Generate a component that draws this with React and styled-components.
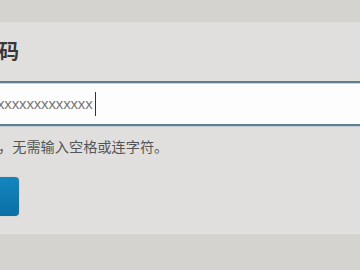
import styled, { createGlobalStyle } from 'styled-components';

const GlobalStyle = createGlobalStyle`
  html, body {
    margin: 0;
    padding: 0;
    background: #d4d3d0;
    overflow: hidden;
  }
  body {
    font-family: "Noto Sans CJK SC", "Liberation Sans", sans-serif;
  }
`;

const Page = styled.div`
  width: 360px;
  height: 270px;
  padding-top: 22px;
  box-sizing: border-box;
  overflow: hidden;
`;

const Panel = styled.section`
  height: 212px;
  background: #e0dfdd;
  padding-top: 16px;
  box-sizing: border-box;
  border-bottom: 1px solid #e4e3e1;
`;

const Heading = styled.h2`
  margin: 0;
  font-size: 20px;
  line-height: 26px;
  font-weight: 700;
  color: #383838;
  margin-left: -1px;
`;

const Field = styled.div`
  margin: 17px -4px 0 -4px;
  height: 45px;
  box-sizing: border-box;
  background: #fdfdfd;
  border-top: 2px solid #5f7f90;
  border-bottom: 2px solid #5f7f90;
  box-shadow: inset 0 1px 0 #c9d6dd, 0 1px 0 #c2ccd2;
  display: flex;
  align-items: center;
  padding-left: 2px;
`;

const Value = styled.span`
  font-family: "Liberation Sans", "DejaVu Sans", sans-serif;
  font-size: 15px;
  letter-spacing: -0.15px;
  color: #777;
  margin-left: -1px;
`;

const Caret = styled.span`
  display: inline-block;
  width: 1px;
  height: 24px;
  background: #333;
  margin-left: 2px;
`;

const Hint = styled.p`
  margin: 10px 0 0 -2px;
  font-size: 14.2px;
  line-height: 20px;
  color: #555;
  white-space: nowrap;
`;

const Button = styled.button`
  display: block;
  margin: 21px 0 0 -30px;
  width: 49px;
  height: 39px;
  border: none;
  border-radius: 4px;
  background: linear-gradient(#1486bf, #0a70a5);
  box-shadow: 0 0 1px rgba(0, 60, 100, 0.4);
`;

export default function App() {
  return (
    <>
      <GlobalStyle />
      <Page>
        <Panel>
          <Heading>码</Heading>
          <Field>
            <Value>xxxxxxxxxxxxx</Value>
            <Caret />
          </Field>
          <Hint>，无需输入空格或连字符。</Hint>
          <Button aria-label="下一步" />
        </Panel>
      </Page>
    </>
  );
}
